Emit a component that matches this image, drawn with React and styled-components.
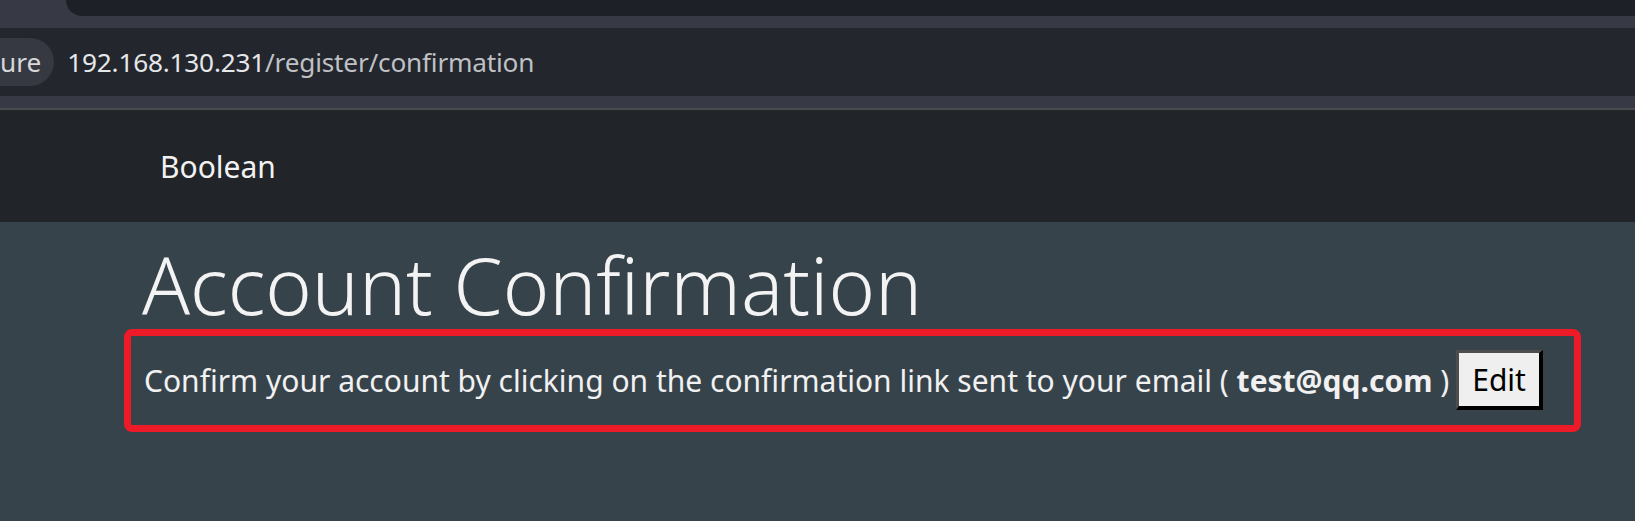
import React from "react";
import styled, { createGlobalStyle } from "styled-components";

const GlobalStyle = createGlobalStyle`
  html, body {
    margin: 0;
    padding: 0;
    background: #37434b;
    font-family: "Noto Sans", "Open Sans", sans-serif;
    overflow: hidden;
  }
`;

const Page = styled.div`
  width: 1635px;
  height: 521px;
  display: flex;
  flex-direction: column;
  background: #37434b;
`;

/* browser chrome */

const TabRow = styled.div`
  display: flex;
  height: 16px;
  background: #373a44;
`;

const TabArea = styled.div`
  flex: 1;
  margin-left: 66px;
  background: #1d2027;
  border-bottom-left-radius: 16px;
`;

const Strip = styled.div`
  height: 12px;
  background: #373a44;
  border-bottom: ${(props) => (props.line ? "2px solid #4b4b4d" : "none")};
`;

const AddressBar = styled.div`
  height: 68px;
  display: flex;
  align-items: center;
  background: #23262d;
  color: #bfc1c5;
  font-size: 26.2px;
`;

const SecurityPill = styled.div`
  height: 48px;
  display: flex;
  align-items: center;
  margin-left: -30px;
  padding: 0 13px 0 30px;
  border-radius: 24px;
  background: #363941;
  color: #d7d8db;
`;

const Url = styled.div`
  margin-left: 13px;
  letter-spacing: -0.2px;
`;

const Host = styled.span`
  color: #e6e7e9;
`;

/* site */

const Navbar = styled.nav`
  height: 112px;
  display: flex;
  align-items: center;
  padding-left: 160px;
  background: #212428;
`;

const Brand = styled.a`
  color: #f2f2f2;
  font-size: 30px;
  text-decoration: none;
`;

const Main = styled.main`
  padding: 19px 54px 0 124px;
`;

const Title = styled.h1`
  margin: 0 0 0 18px;
  font-size: 79px;
  font-weight: 300;
  line-height: 88px;
  color: #f3f3f3;
`;

const Notice = styled.div`
  display: flex;
  align-items: center;
  padding: 14px 13px 15px;
  border: 7px solid #ec1b27;
  border-radius: 8px;
  color: #f1f1f1;
  font-size: 30px;
`;

const Email = styled.b`
  font-weight: 700;
`;

const EditButton = styled.button`
  height: 60px;
  margin-left: 7px;
  padding: 0 13px;
  background: #efefef;
  color: #000;
  font-family: "Noto Sans", "Open Sans", sans-serif;
  font-size: 30px;
  border-style: solid;
  border-width: 3px 4px 4px 3px;
  border-color: #4d4d4d #000 #000 #4d4d4d;
`;

export default function App() {
  return (
    <>
      <GlobalStyle />
      <Page>
        <TabRow>
          <TabArea />
        </TabRow>
        <Strip />
        <AddressBar>
          <SecurityPill>ure</SecurityPill>
          <Url>
            <Host>192.168.130.231</Host>/register/confirmation
          </Url>
        </AddressBar>
        <Strip line />
        <Navbar>
          <Brand href="#">Boolean</Brand>
        </Navbar>
        <Main>
          <Title>Account Confirmation</Title>
          <Notice>
            <span>
              Confirm your account by clicking on the confirmation link sent to
              your email ( <Email>test@qq.com</Email> )
            </span>
            <EditButton>Edit</EditButton>
          </Notice>
        </Main>
      </Page>
    </>
  );
}
